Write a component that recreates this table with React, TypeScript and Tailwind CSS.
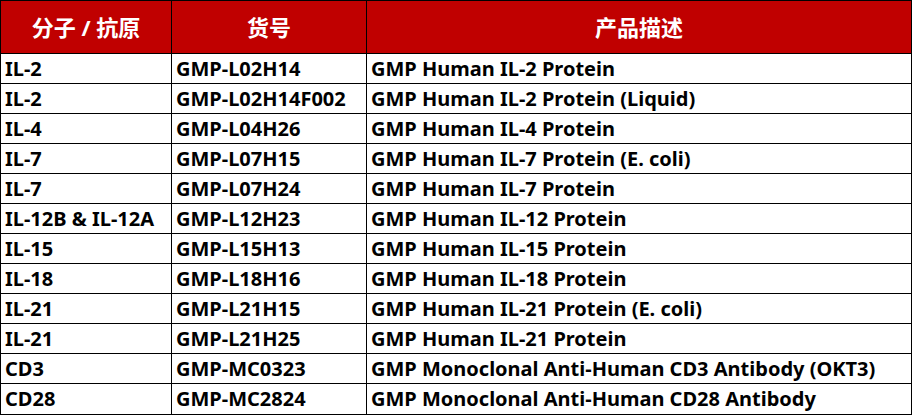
import React from "react";

const rows: [string, string, string][] = [
  ["IL-2", "GMP-L02H14", "GMP Human IL-2 Protein"],
  ["IL-2", "GMP-L02H14F002", "GMP Human IL-2 Protein (Liquid)"],
  ["IL-4", "GMP-L04H26", "GMP Human IL-4 Protein"],
  ["IL-7", "GMP-L07H15", "GMP Human IL-7 Protein (E. coli)"],
  ["IL-7", "GMP-L07H24", "GMP Human IL-7 Protein"],
  ["IL-12B & IL-12A", "GMP-L12H23", "GMP Human IL-12 Protein"],
  ["IL-15", "GMP-L15H13", "GMP Human IL-15 Protein"],
  ["IL-18", "GMP-L18H16", "GMP Human IL-18 Protein"],
  ["IL-21", "GMP-L21H15", "GMP Human IL-21 Protein (E. coli)"],
  ["IL-21", "GMP-L21H25", "GMP Human IL-21 Protein"],
  ["CD3", "GMP-MC0323", "GMP Monoclonal Anti-Human CD3 Antibody (OKT3)"],
  ["CD28", "GMP-MC2824", "GMP Monoclonal Anti-Human CD28 Antibody"],
];

export default function App() {
  return (
    <div
      className="w-[913px] h-[416px] bg-white"
      style={{ fontFamily: '"Noto Sans", "Noto Sans CJK SC", sans-serif' }}
    >
      <div className="w-[912px] border border-black grid grid-cols-[171px_195px_1fr] text-black">
        <div className="h-[53px] bg-[#c00000] text-white font-bold text-[22px] flex items-center justify-center border-r border-b border-black whitespace-pre">
          分子 / 抗原
        </div>
        <div className="h-[53px] bg-[#c00000] text-white font-bold text-[22px] flex items-center justify-center border-r border-b border-black">
          货号
        </div>
        <div className="h-[53px] bg-[#c00000] text-white font-bold text-[22px] flex items-center justify-center border-b border-black">
          产品描述
        </div>
        {rows.map((r, i) => {
          const last = i === rows.length - 1;
          const b = last ? "" : "border-b";
          return (
            <React.Fragment key={i}>
              <div className={`h-[30px] ${b} border-r border-black flex items-center pl-[4px] text-[20px] font-bold leading-none whitespace-nowrap`}>
                {r[0]}
              </div>
              <div className={`h-[30px] ${b} border-r border-black flex items-center pl-[4px] text-[20px] font-bold leading-none whitespace-nowrap`}>
                {r[1]}
              </div>
              <div className={`h-[30px] ${b} border-black flex items-center pl-[4px] text-[20px] font-bold leading-none whitespace-nowrap`}>
                {r[2]}
              </div>
            </React.Fragment>
          );
        })}
      </div>
    </div>
  );
}
